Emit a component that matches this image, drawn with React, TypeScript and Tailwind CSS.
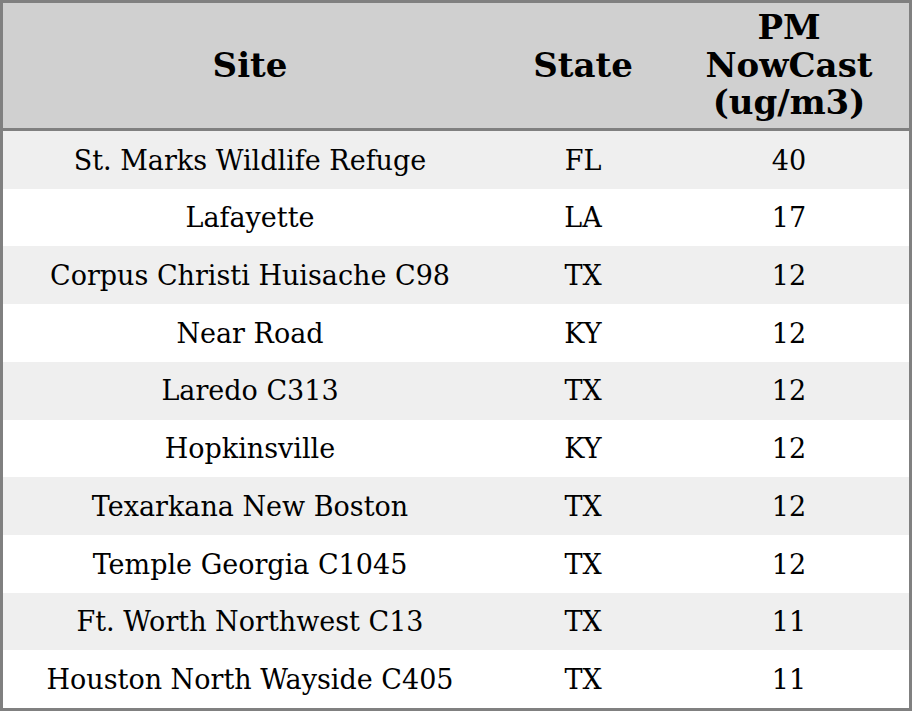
import React from "react";

const rows: [string, string, string][] = [
  ["St. Marks Wildlife Refuge", "FL", "40"],
  ["Lafayette", "LA", "17"],
  ["Corpus Christi Huisache C98", "TX", "12"],
  ["Near Road", "KY", "12"],
  ["Laredo C313", "TX", "12"],
  ["Hopkinsville", "KY", "12"],
  ["Texarkana New Boston", "TX", "12"],
  ["Temple Georgia C1045", "TX", "12"],
  ["Ft. Worth Northwest C13", "TX", "11"],
  ["Houston North Wayside C405", "TX", "11"],
];

export default function App() {
  return (
    <div
      className="w-[912px] h-[711px] border-[3px] border-[#808080] bg-white flex flex-col text-black"
      style={{ fontFamily: '"DejaVu Serif", serif' }}
    >
      <div className="grid grid-cols-[494px_172px_240px] h-[125px] bg-[#d0d0d0] border-b-[3px] border-[#808080] box-content font-bold text-[34px] leading-[37.5px]">
        <div className="flex items-center justify-center text-center">Site</div>
        <div className="flex items-center justify-center text-center">State</div>
        <div className="flex items-center justify-center text-center">
          PM
          <br />
          NowCast
          <br />
          (ug/m3)
        </div>
      </div>
      <div className="flex flex-col flex-1">
        {rows.map((r, i) => (
          <div
            key={i}
            className={`grid grid-cols-[494px_172px_240px] flex-1 pt-[2px] text-[27px] ${i % 2 === 0 ? "bg-[#efefef]" : "bg-white"}`}
          >
            <div className="flex items-center justify-center">{r[0]}</div>
            <div className="flex items-center justify-center">{r[1]}</div>
            <div className="flex items-center justify-center">{r[2]}</div>
          </div>
        ))}
      </div>
    </div>
  );
}
